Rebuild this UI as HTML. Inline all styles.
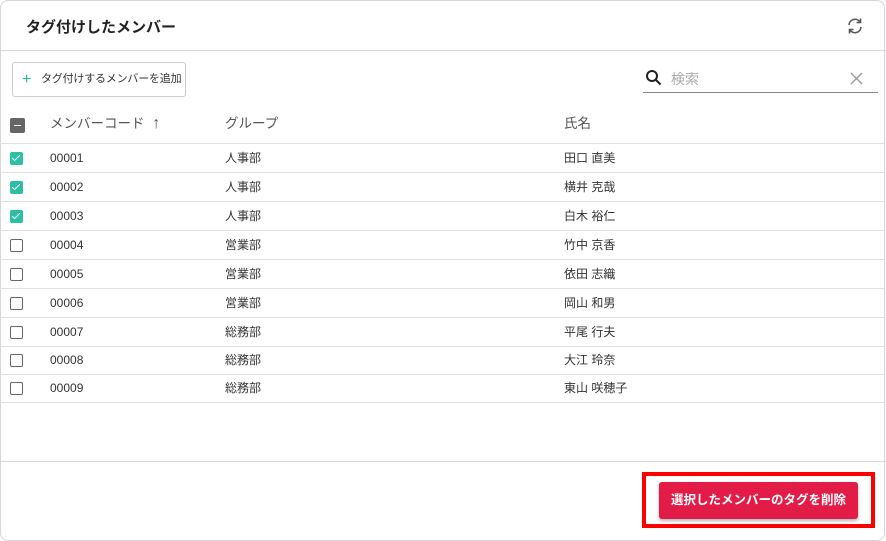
<!DOCTYPE html>
<html><head><meta charset="utf-8"><style>
*{box-sizing:border-box;margin:0;padding:0}
body{width:886px;height:541px;background:#fff;font-family:"Liberation Sans","Noto Sans CJK JP",sans-serif;color:#333;position:relative;overflow:hidden}
.card{position:absolute;left:0;top:0;width:885px;height:541px;border:1px solid #d6d6d6;border-radius:8px;}
.title{position:absolute;left:26px;top:16px;font-size:15px;font-weight:bold;color:#222}
.hl{position:absolute;left:0;right:0;height:1px;background:#d6d6d6}
.addbtn{position:absolute;left:12px;top:62px;width:174px;height:35px;border:1px solid #ccc;border-radius:3px;font-size:11px;line-height:33px;padding-left:28px;color:#333;white-space:nowrap;letter-spacing:-0.2px}
.addbtn span{position:absolute;left:9px;top:0;color:#2bb8a0;font-size:16px}
.search{position:absolute;left:643px;top:64px;width:235px;height:29px;border-bottom:1px solid #888}
.row{position:absolute;left:0;width:884px;height:29px;border-bottom:1px solid #e0e0e0;font-size:12px;line-height:28px}
.row div{position:absolute;top:0}
.cb{position:absolute;left:10px;top:8px;width:13px;height:13px;border:1.5px solid #666;border-radius:2px}
.cb.on{background:#2bbfa4;border-color:#2bbfa4}
.th{font-size:13.5px;color:#555}
.del{position:absolute;left:659px;top:482px;width:199px;height:37px;background:#e31b47;border-radius:3px;color:#fff;font-size:12.5px;font-weight:bold;text-align:center;line-height:37px;box-shadow:0 2px 3px rgba(0,0,0,.3)}
.red{position:absolute;left:642px;top:472px;width:233px;height:56px;border:4px solid #ff0000}
.cb.on::after{content:"";position:absolute;left:3px;top:0px;width:3px;height:7px;border:solid #fff;border-width:0 1.6px 1.6px 0;transform:rotate(45deg)}
</style></head><body>
<div class="card"></div>
<div class="title">タグ付けしたメンバー</div>
<svg style="position:absolute;left:846px;top:17px" width="18" height="18" viewBox="0 0 18 18" fill="none" stroke="#555" stroke-width="1.6"><path d="M3 8a6 6 0 0 1 11-3"/><path d="M15 10a6 6 0 0 1-11 3"/><path d="M14.5 1.5v4h-4" /><path d="M3.5 16.5v-4h4"/></svg>
<div class="hl" style="top:50px"></div>
<div class="addbtn"><span>+</span>タグ付けするメンバーを追加</div>
<div class="search">
<svg style="position:absolute;left:2px;top:5px" width="17" height="17" viewBox="0 0 17 17" fill="none" stroke="#222" stroke-width="2"><circle cx="7" cy="7" r="5"/><path d="M10.5 10.5l5 5"/></svg>
<div style="position:absolute;left:28px;top:5px;font-size:14px;color:#aaa">検索</div>
<svg style="position:absolute;left:207px;top:8px" width="13" height="13" viewBox="0 0 13 13" stroke="#999" stroke-width="1.4"><path d="M1 1l11 11M12 1L1 12"/></svg>
</div>
<div class="row" style="top:108px;height:36px;line-height:32px">
<div class="cb" style="top:10px;background:#666;border-color:#666;width:15px;height:15px"><span style="position:absolute;left:2.5px;top:5.5px;width:7px;height:1.5px;background:#fff"></span></div>
<div class="th" style="left:50px">メンバーコード <span style="color:#555;font-size:16px;margin-left:4px">↑</span></div>
<div class="th" style="left:225px">グループ</div>
<div class="th" style="left:564px">氏名</div>
</div>
<div class="row" style="top:144px"><span class="cb on"></span><div style="left:50px">00001</div><div style="left:225px">人事部</div><div style="left:564px">田口 直美</div></div>
<div class="row" style="top:173px"><span class="cb on"></span><div style="left:50px">00002</div><div style="left:225px">人事部</div><div style="left:564px">横井 克哉</div></div>
<div class="row" style="top:202px"><span class="cb on"></span><div style="left:50px">00003</div><div style="left:225px">人事部</div><div style="left:564px">白木 裕仁</div></div>
<div class="row" style="top:231px"><span class="cb"></span><div style="left:50px">00004</div><div style="left:225px">営業部</div><div style="left:564px">竹中 京香</div></div>
<div class="row" style="top:260px"><span class="cb"></span><div style="left:50px">00005</div><div style="left:225px">営業部</div><div style="left:564px">依田 志織</div></div>
<div class="row" style="top:289px"><span class="cb"></span><div style="left:50px">00006</div><div style="left:225px">営業部</div><div style="left:564px">岡山 和男</div></div>
<div class="row" style="top:318px"><span class="cb"></span><div style="left:50px">00007</div><div style="left:225px">総務部</div><div style="left:564px">平尾 行夫</div></div>
<div class="row" style="top:346px"><span class="cb"></span><div style="left:50px">00008</div><div style="left:225px">総務部</div><div style="left:564px">大江 玲奈</div></div>
<div class="row" style="top:374px"><span class="cb"></span><div style="left:50px">00009</div><div style="left:225px">総務部</div><div style="left:564px">東山 咲穂子</div></div>
<div class="hl" style="top:461px"></div>
<div class="del">選択したメンバーのタグを削除</div>
<div class="red"></div>
</body></html>
